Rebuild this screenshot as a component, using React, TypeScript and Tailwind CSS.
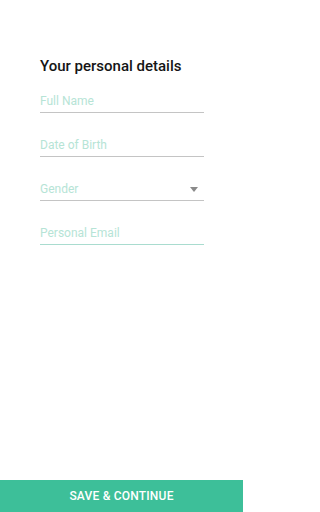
import React from 'react';

function Field({ label, select, active }: { label: string; select?: boolean; active?: boolean }) {
  return (
    <div
      className={`flex items-center justify-between h-[20px] pb-[3px] border-b ${
        active ? 'border-[#a9dccf]' : 'border-[#c4c4c4]'
      }`}
    >
      <span className="text-[12px] leading-[16px] text-[#b6e4d6]">{label}</span>
      {select && (
        <svg width="8" height="5" viewBox="0 0 8 5" className="mr-[6px]">
          <path d="M0 0h8L4 5z" fill="#8a8a8a" />
        </svg>
      )}
    </div>
  );
}

export default function App() {
  return (
    <div className="w-[243px] h-[512px] flex flex-col bg-white font-['Roboto',sans-serif]">
      <div className="flex-1 pl-10 pr-[39px] pt-[56px]">
        <h1 className="text-[15px] leading-[20px] font-medium text-[#151515]">Your personal details</h1>
        <div className="mt-[17px] flex flex-col gap-[24px]">
          <Field label="Full Name" />
          <Field label="Date of Birth" />
          <Field label="Gender" select />
          <Field label="Personal Email" active />
        </div>
      </div>
      <button className="h-[32px] bg-[#3dbf99] text-white text-[12px] font-medium tracking-[0.2px] uppercase">
        Save &amp; Continue
      </button>
    </div>
  );
}
